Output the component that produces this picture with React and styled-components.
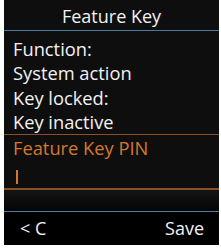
import styled, { createGlobalStyle } from "styled-components"

const Global = createGlobalStyle`
  body {
    margin: 0;
    background: #fff;
    font-family: "Open Sans", "Noto Sans", sans-serif;
  }
`

const Screen = styled.div`
  margin-left: 4px;
  width: 215px;
  height: 245px;
  background: #0e0e0e;
  display: flex;
  flex-direction: column;
  color: #f2f2f2;
`

const Header = styled.div`
  height: 31px;
  border-bottom: 1px solid #4d7a9e;
  display: flex;
  justify-content: center;
  align-items: flex-end;
  font-size: 18px;
  line-height: 26px;
  padding-bottom: 1px;
  box-sizing: border-box;
`

const Body = styled.div`
  padding: 6px 0 0 9px;
  display: flex;
  flex-direction: column;
`

const Line = styled.div`
  font-size: 18.3px;
  line-height: 24.3px;
  white-space: nowrap;
`

const Field = styled.div`
  border-top: 1px solid #8a4f22;
  border-bottom: 2px solid #8a4f22;
  padding: 1px 0 4px 9px;
  color: #d5782c;
  display: flex;
  flex-direction: column;
`

const Cursor = styled.div`
  width: 2px;
  height: 14px;
  background: #d5782c;
  margin: 10px 0 0 3px;
`

const Spacer = styled.div`
  flex: 1;
  background: linear-gradient(#141414, #050505);
`

const Footer = styled.div`
  height: 34px;
  background: #000;
  border-top: 1px solid #4d7a9e;
  display: flex;
  justify-content: space-between;
  align-items: center;
  padding: 0 15px 2px 16px;
  font-size: 18px;
  box-sizing: border-box;
`

export default function App() {
  return (
    <>
      <Global />
      <Screen>
        <Header>Feature Key</Header>
        <Body>
          <Line>Function:</Line>
          <Line>System action</Line>
          <Line>Key locked:</Line>
          <Line>Key inactive</Line>
        </Body>
        <Field>
          <Line>Feature Key PIN</Line>
          <Cursor />
        </Field>
        <Spacer />
        <Footer>
          <span>&lt; C</span>
          <span>Save</span>
        </Footer>
      </Screen>
    </>
  )
}
